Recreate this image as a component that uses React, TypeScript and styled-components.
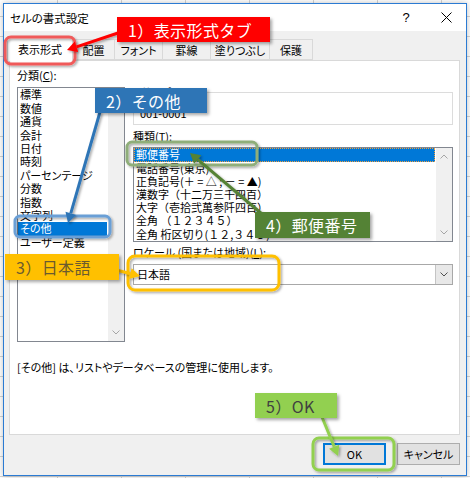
import React from 'react'
import styled, { createGlobalStyle } from 'styled-components'

const GlobalStyle = createGlobalStyle`
  html, body { margin: 0; padding: 0; }
  body {
    font-family: "Noto Sans CJK JP", "Noto Sans", sans-serif;
    font-feature-settings: "palt";
    overflow: hidden;
    color: #000;
  }
`

const Desktop = styled.div`
  position: relative;
  width: 470px;
  height: 478px;
  overflow: hidden;
  box-sizing: border-box;
  padding: 3px 0 0 3px;
  background-color: #fff;
  background-image:
    linear-gradient(to right, #d4d4d4 1px, transparent 1px),
    linear-gradient(to bottom, #d4d4d4 1px, transparent 1px);
  background-size: 64px 20px;
  background-position: 57px 0, 0 16px;
`

const Dialog = styled.div`
  width: 464px;
  height: 473px;
  box-sizing: border-box;
  border: 1px solid #2b7bd3;
  background: #f0f0f0;
  display: flex;
  flex-direction: column;
  box-shadow: 0 0 6px rgba(0, 0, 0, 0.25);
`

const TitleBar = styled.div`
  height: 27px;
  flex: none;
  background: #fff;
  display: flex;
  align-items: center;
  padding-left: 6px;
  font-size: 11.5px;
`

const TitleText = styled.span`
  flex: 1;
`

const TitleButton = styled.div`
  width: 40px;
  height: 27px;
  display: flex;
  align-items: center;
  justify-content: center;
  font-family: "Liberation Sans", sans-serif;
  font-size: 13px;
`

const Body = styled.div`
  flex: 1;
  display: flex;
  flex-direction: column;
  padding: 5px 6px 0 5px;
`

const TabStrip = styled.div`
  height: 24px;
  display: flex;
  align-items: flex-end;
`

const Tab = styled.div<{ $active?: boolean; $w: number; $first?: boolean }>`
  position: relative;
  box-sizing: border-box;
  width: ${p => p.$w}px;
  height: ${p => (p.$active ? 25 : 21)}px;
  margin-left: ${p => (p.$first ? -2 : -1)}px;
  margin-bottom: ${p => (p.$active ? -1 : 0)}px;
  z-index: ${p => (p.$active ? 2 : 1)};
  background: ${p => (p.$active ? '#fff' : '#f0f0f0')};
  border: 1px solid #d9d9d9;
  border-bottom: ${p => (p.$active ? 'none' : '1px solid #d9d9d9')};
  display: flex;
  align-items: center;
  justify-content: center;
  font-size: 11px;
  padding-top: ${p => (p.$active ? 0 : 1)}px;
`

const Panel = styled.div`
  height: 375px;
  box-sizing: border-box;
  flex: none;
  background: #fff;
  border: 1px solid #d9d9d9;
  padding: 8px 6px 0 7px;
  display: flex;
  flex-direction: column;
`

const Columns = styled.div`
  display: grid;
  grid-template-columns: 108px 320px;
  column-gap: 8px;
`

const Column = styled.div<{ $pad?: number }>`
  display: flex;
  flex-direction: column;
  padding-top: ${p => p.$pad || 0}px;
`

const Label = styled.div<{ $gap?: number }>`
  font-size: 11px;
  line-height: 13.4px;
  margin-top: ${p => p.$gap || 0}px;
  white-space: nowrap;
`

const Key = styled.span`
  text-decoration: underline;
`

const ListBox = styled.div<{ $h: number; $gap: number }>`
  position: relative;
  height: ${p => p.$h}px;
  margin-top: ${p => p.$gap}px;
  box-sizing: border-box;
  border: 1px solid #828790;
  background: #fff;
  display: flex;
  overflow: hidden;
`

const Items = styled.div`
  flex: 1;
  min-width: 0;
  overflow: hidden;
`

const Item = styled.div<{ $sel?: boolean; $lh: number; $wide?: boolean }>`
  font-size: 11px;
  line-height: ${p => p.$lh}px;
  padding-left: 2px;
  margin-right: 1px;
  white-space: nowrap;
  font-feature-settings: ${p => (p.$wide ? 'normal' : '"palt"')};
  background: ${p => (p.$sel ? '#0078d7' : 'transparent')};
  color: ${p => (p.$sel ? '#fff' : '#000')};
  outline: ${p => (p.$sel && p.$wide ? '1px dotted #f0a040' : 'none')};
  outline-offset: -1px;
`

const ScrollTrack = styled.div`
  width: 16px;
  flex: none;
  background-color: #f0f0f0;
  background-image: radial-gradient(#e2e2e2 0.6px, transparent 0.7px);
  background-size: 2px 2px;
  display: flex;
  flex-direction: column;
  justify-content: space-between;
  align-items: center;
  padding: 6px 0;
  box-sizing: border-box;
`

const SampleGroup = styled.fieldset`
  box-sizing: border-box;
  height: 39px;
  margin: 0;
  padding: 8px 0 0 6px;
  min-width: 0;
  border: 1px solid #dcdcdc;
  font-size: 11px;
  line-height: 13px;
`

const SampleLegend = styled.legend`
  padding: 0 1px;
  font-size: 11px;
  line-height: 13.4px;
`

const Combo = styled.div`
  height: 21px;
  margin-top: 4px;
  box-sizing: border-box;
  border: 1px solid #a8a8a8;
  background: #fff;
  display: flex;
  align-items: center;
  font-size: 11px;
  padding-left: 3px;
`

const ComboText = styled.span`
  flex: 1;
`

const ComboButton = styled.div`
  width: 17px;
  height: 19px;
  box-sizing: border-box;
  border-left: 1px solid #c4c4c4;
  background: #e8e8e8;
  display: flex;
  align-items: center;
  justify-content: center;
`

const Description = styled.div`
  margin-top: 19px;
  font-size: 11px;
  line-height: 13px;
`

const ButtonBar = styled.div`
  flex: 1;
  display: flex;
  justify-content: flex-end;
  align-items: flex-start;
  gap: 11px;
  padding-top: 8px;
`

const Button = styled.div<{ $default?: boolean }>`
  width: 63px;
  height: 22px;
  box-sizing: border-box;
  background: #e1e1e1;
  border: 1px solid ${p => (p.$default ? '#0078d7' : '#adadad')};
  box-shadow: ${p => (p.$default ? 'inset 0 0 0 1px #0078d7' : 'none')};
  display: flex;
  align-items: center;
  justify-content: center;
  font-size: 11px;
`

const Overlay = styled.svg`
  position: absolute;
  left: 0;
  top: 0;
  pointer-events: none;
  z-index: 5;
`

const Callout = styled.div<{ $x: number; $y: number; $w: number; $h: number; $bg: string; $fg: string }>`
  position: absolute;
  left: ${p => p.$x}px;
  top: ${p => p.$y}px;
  width: ${p => p.$w}px;
  height: ${p => p.$h}px;
  box-sizing: border-box;
  background: ${p => p.$bg};
  color: ${p => p.$fg};
  z-index: 6;
  display: flex;
  align-items: center;
  padding-left: 11px;
  font-size: 16px;
  letter-spacing: 0.4px;
  font-feature-settings: normal;
  white-space: nowrap;
  box-shadow: 2px 2px 3px rgba(0, 0, 0, 0.35);
`

const Chevron = ({ up, color = '#a6a6a6' }: { up?: boolean; color?: string }) => (
  <svg width="8" height="5" viewBox="0 0 8 5">
    <polyline
      points={up ? '0.5,4.5 4,1 7.5,4.5' : '0.5,0.5 4,4 7.5,0.5'}
      fill="none"
      stroke={color}
      strokeWidth="1"
    />
  </svg>
)

type Pt = [number, number]

const Arrow = ({ from, to, color }: { from: Pt; to: Pt; color: string }) => {
  const dx = to[0] - from[0]
  const dy = to[1] - from[1]
  const len = Math.sqrt(dx * dx + dy * dy)
  const ux = dx / len
  const uy = dy / len
  const head = 10
  const half = 5.5
  const bx = to[0] - ux * head
  const by = to[1] - uy * head
  const pts = [
    `${to[0]},${to[1]}`,
    `${bx - uy * half},${by + ux * half}`,
    `${bx + uy * half},${by - ux * half}`
  ].join(' ')
  return (
    <g>
      <line x1={from[0]} y1={from[1]} x2={bx} y2={by} stroke={color} strokeWidth="3" />
      <polygon points={pts} fill={color} />
    </g>
  )
}

const categories = ['標準', '数値', '通貨', '会計', '日付', '時刻', 'パーセンテージ', '分数', '指数', '文字列', 'その他', 'ユーザー定義']

const types = [
  '郵便番号',
  '電話番号(東京)',
  '正負記号(＋ = △ ; － = ▲)',
  '漢数字（十二万三千四百）',
  '大字（壱拾弐萬参阡四百）',
  '全角 （１２３４５）',
  '全角 桁区切り(１２,３４５)'
]

const tabs = [
  { name: '表示形式', w: 66 },
  { name: '配置', w: 43 },
  { name: 'フォント', w: 49 },
  { name: '罫線', w: 49 },
  { name: '塗りつぶし', w: 60 },
  { name: '保護', w: 44 }
]

export default function App() {
  return (
    <Desktop>
      <GlobalStyle />
      <Dialog>
        <TitleBar>
          <TitleText>セルの書式設定</TitleText>
          <TitleButton>?</TitleButton>
          <TitleButton>
            <svg width="11" height="11" viewBox="0 0 11 11">
              <path d="M0.5 0.5 L10.5 10.5 M10.5 0.5 L0.5 10.5" stroke="#000" strokeWidth="1" />
            </svg>
          </TitleButton>
        </TitleBar>
        <Body>
          <TabStrip>
            {tabs.map((t, i) => (
              <Tab key={t.name} $w={t.w} $active={i === 0} $first={i === 0}>
                {t.name}
              </Tab>
            ))}
          </TabStrip>
          <Panel>
            <Columns>
              <Column>
                <Label>
                  分類(<Key>C</Key>):
                </Label>
                <ListBox $h={255} $gap={5}>
                  <Items>
                    {categories.map(c => (
                      <Item key={c} $lh={13.4} $sel={c === 'その他'}>
                        {c}
                      </Item>
                    ))}
                  </Items>
                  <ScrollTrack>
                    <Chevron up />
                    <Chevron />
                  </ScrollTrack>
                </ListBox>
              </Column>
              <Column $pad={17}>
                <SampleGroup>
                  <SampleLegend>サンプル</SampleLegend>
                  001-0001
                </SampleGroup>
                <Label $gap={5}>
                  種類(<Key>T</Key>):
                </Label>
                <ListBox $h={95} $gap={4}>
                  <Items>
                    {types.map((t, i) => (
                      <Item key={t} $lh={13.2} $sel={i === 0} $wide>
                        {t}
                      </Item>
                    ))}
                  </Items>
                  <ScrollTrack>
                    <Chevron up />
                    <Chevron />
                  </ScrollTrack>
                </ListBox>
                <Label $gap={4}>
                  ロケール (国または地域)(<Key>L</Key>):
                </Label>
                <Combo>
                  <ComboText>日本語</ComboText>
                  <ComboButton>
                    <Chevron color="#505050" />
                  </ComboButton>
                </Combo>
              </Column>
            </Columns>
            <Description>[その他] は、リストやデータベースの管理に使用します。</Description>
          </Panel>
          <ButtonBar>
            <Button $default>OK</Button>
            <Button>キャンセル</Button>
          </ButtonBar>
        </Body>
      </Dialog>

      <Overlay width="470" height="478" viewBox="0 0 470 478">
        <defs>
          <filter id="sh" x="-20%" y="-20%" width="140%" height="140%">
            <feDropShadow dx="1.5" dy="1.5" stdDeviation="1.2" floodOpacity="0.35" />
          </filter>
        </defs>
        <g fill="none" strokeWidth="3" filter="url(#sh)">
          <rect x="5" y="37" width="70" height="27" rx="6" stroke="#f05a5a" />
          <rect x="15" y="216" width="95" height="21" rx="5" stroke="#6a9fd6" />
          <rect x="127" y="142" width="130" height="23" rx="5" stroke="#8fae7a" />
          <rect x="128" y="256" width="151" height="34" rx="7" stroke="#ffc000" />
          <rect x="313" y="438" width="81" height="32" rx="6" stroke="#92d050" />
        </g>
        <g filter="url(#sh)">
          <Arrow from={[118, 33]} to={[67, 50]} color="#ff0000" />
          <Arrow from={[100, 112]} to={[68, 223]} color="#2e75b6" />
          <Arrow from={[262, 214]} to={[190, 153]} color="#548235" />
          <Arrow from={[116, 270]} to={[140, 276]} color="#ffc000" />
          <Arrow from={[322, 417]} to={[338, 456]} color="#92d050" />
        </g>
      </Overlay>

      <Callout $x={117} $y={17} $w={153} $h={25} $bg="#ff0000" $fg="#fff">1）表示形式タブ</Callout>
      <Callout $x={95} $y={88} $w={112} $h={25} $bg="#2e75b6" $fg="#fff">2）その他</Callout>
      <Callout $x={5} $y={254} $w={114} $h={26} $bg="#ffc000" $fg="#6b5b2e">3）日本語</Callout>
      <Callout $x={255} $y={212} $w={115} $h={26} $bg="#548235" $fg="#fff">4）郵便番号</Callout>
      <Callout $x={255} $y={393} $w={82} $h={25} $bg="#92d050" $fg="#404040">5）OK</Callout>
    </Desktop>
  )
}
